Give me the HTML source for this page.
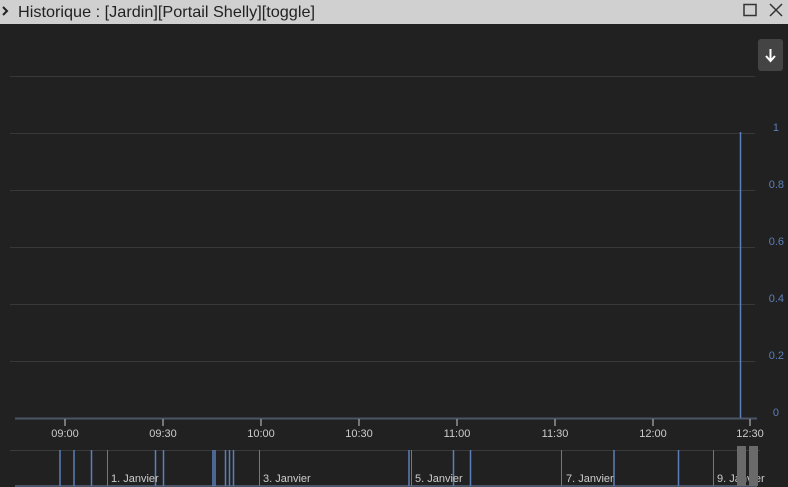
<!DOCTYPE html><html><head><style>
body{margin:0;width:788px;height:487px;background:#212121;overflow:hidden;font-family:"Liberation Sans",sans-serif}
.h{position:absolute;left:0;top:0;width:788px;height:24px;background:#d0d0d0}
</style></head><body>
<div class="h"></div>
<svg width="788" height="487" style="position:absolute;left:0;top:0" font-family="Liberation Sans, sans-serif">
<path d="M3 7l4 4-4 4" stroke="#222" stroke-width="2" fill="none"/>
<text x="18" y="17" font-size="16" fill="#222" textLength="297" lengthAdjust="spacingAndGlyphs">Historique : [Jardin][Portail Shelly][toggle]</text>
<rect x="744" y="4.5" width="12" height="11" stroke="#333" stroke-width="1.5" fill="none"/>
<path d="M770 4l12 12M782 4l-12 12" stroke="#333" stroke-width="1.5"/>
<rect x="758" y="39" width="25" height="32" rx="3" fill="#444"/>
<path d="M770.5 49v12M766 56l4.5 5 4.5-5" stroke="#fff" stroke-width="2" fill="none"/>
<g stroke="#383838" stroke-width="1">
<path d="M10 76.5H755M10 133.5H755M10 190.5H755M10 247.5H755M10 304.5H755M10 361.5H755"/>
</g>
<path d="M15 418.5H757" stroke="#4a5566" stroke-width="2"/>
<g fill="#5b7fb8" font-size="11" text-anchor="end"><text x="779" y="131">1</text><text x="784" y="188">0.8</text><text x="784" y="245">0.6</text><text x="784" y="302">0.4</text><text x="784" y="359">0.2</text><text x="779" y="416">0</text></g>
<path d="M740.5 132V418" stroke="#5b7fb8" stroke-width="1.5"/>
<g stroke="#ccc"><path d="M65 419v7M163 419v7M261 419v7M359 419v7M457 419v7M555 419v7M653 419v7M750 419v7"/></g>
<g fill="#ccc" font-size="11" text-anchor="middle"><text x="65" y="437">09:00</text><text x="163" y="437">09:30</text><text x="261" y="437">10:00</text><text x="359" y="437">10:30</text><text x="457" y="437">11:00</text><text x="555" y="437">11:30</text><text x="653" y="437">12:00</text><text x="750" y="437">12:30</text></g>
<path d="M10 450.5H760" stroke="#3a3a3a"/>
<path d="M15 486H757" stroke="#4a5566" stroke-width="2"/>
<g stroke="#777"><path d="M107.5 450v36M259.5 450v36M411.5 450v36M561.5 450v36M713.5 450v36"/></g>
<g stroke="#5b7fb8" stroke-width="1.5"><path d="M60 450v36M74 450v36M91.5 450v36M155.5 450v36M163.5 450v36M213 450v36M215 450v36M225.5 450v36M229.5 450v36M233.5 450v36M409 450v36M453.5 450v36M470.5 450v36M614 450v36M678.5 450v36"/></g>
<g fill="#ccc" font-size="11"><text x="111" y="482">1. Janvier</text><text x="263" y="482">3. Janvier</text><text x="415" y="482">5. Janvier</text><text x="566" y="482">7. Janvier</text><text x="717" y="482">9. Janvier</text></g>
<rect x="737" y="446" width="9" height="40" fill="#6a6a6a"/><rect x="749" y="446" width="9" height="40" fill="#6a6a6a"/>
</svg>
</body></html>
